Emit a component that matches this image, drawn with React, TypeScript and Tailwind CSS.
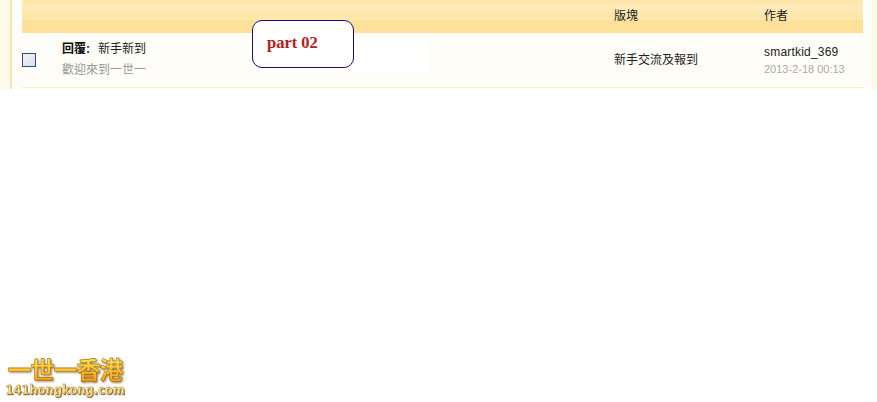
export default function App() {
  return (
    <div className="relative flex h-[402px] w-[877px] flex-col overflow-hidden bg-white font-['Liberation_Sans','Noto_Sans_CJK_TC',sans-serif] text-[12px] text-[#333]">
      {/* Thread table */}
      <div className="flex h-[89px] w-full bg-[#fffdf7]">
        <div className="w-[12px] shrink-0 border-r-2 border-[#f8e4ab] bg-[#fffaec]" />
        <div className="w-[10px] shrink-0" />
        <div className="w-[841px] shrink-0">
          {/* Header */}
          <div className="flex h-[33px] items-center bg-[linear-gradient(#fde6a8_0,#fde6a8_4px,#feeab6_4px,#feeab6_12px,#fde7ab_12px,#fde7ab_20px,#fde19b_20px,#fde19b_33px)]">
            <div className="w-[592px]" />
            <div className="w-[150px] -translate-y-px text-[12px] text-[#222]">版塊</div>
            <div className="-translate-y-px text-[12px] text-[#222]">作者</div>
          </div>
          {/* Row */}
          <div className="flex h-[55px] items-center border-b border-[#f9eec4]">
            <div className="flex w-[40px] items-center">
              <div className="h-[14px] w-[14px] border-[1.5px] border-[#2a4f70] bg-[linear-gradient(135deg,#f2f5f7,#d5e0e6)]" />
            </div>
            <div className="-mt-[2px] flex w-[552px] flex-col gap-[7px]">
              <div className="text-[12px] leading-[14px] text-[#222]">
                <span className="font-semibold text-[#111]">回覆:</span>
                <span className="ml-[8px]">新手新到</span>
              </div>
              <div className="text-[12px] leading-[14px] text-[#999]">歡迎來到一世一</div>
            </div>
            <div className="w-[150px] text-[12px] text-[#222]">新手交流及報到</div>
            <div className="flex flex-col gap-[4px]">
              <div className="text-[12px] leading-[14px] tracking-[0.2px] text-[#222]">smartkid_369</div>
              <div className="text-[11px] leading-[13px] text-[#aaa]">2013-2-18 00:13</div>
            </div>
          </div>
        </div>
        <div className="w-[9px] shrink-0" />
        <div className="flex-1 bg-[#fff9e8]" />
      </div>

      {/* Annotation */}
      <div className="absolute left-[353px] top-[40px] h-[32px] w-[77px] bg-white" />
      <div className="absolute left-[252px] top-[20px] h-[48px] w-[102px] rounded-[10px] border border-[#1a0a80] bg-white pl-[14px] pt-[12px] font-['Liberation_Serif',serif] text-[16.5px] font-bold leading-[20px] text-[#c01818]">
        part 02
      </div>

      {/* Watermark */}
      <div className="absolute bottom-[5px] left-[6px] flex w-[118px] flex-col items-center">
        <div className="bg-[linear-gradient(#ffe45a,#f99a06)] bg-clip-text text-[24px] font-bold leading-[26px] tracking-[-1px] text-transparent drop-shadow-[1px_1px_1px_#8a7a50] [-webkit-text-stroke:0.4px_#8a5200]">
          一世一香港
        </div>
        <div className="font-['DejaVu_Sans',sans-serif] text-[11.5px] font-bold leading-[13px] text-[#ffe9a0] drop-shadow-[1px_1px_0.5px_#8a7a50] [-webkit-text-stroke:0.3px_#a06000]">
          141hongkong.com
        </div>
      </div>
    </div>
  )
}
